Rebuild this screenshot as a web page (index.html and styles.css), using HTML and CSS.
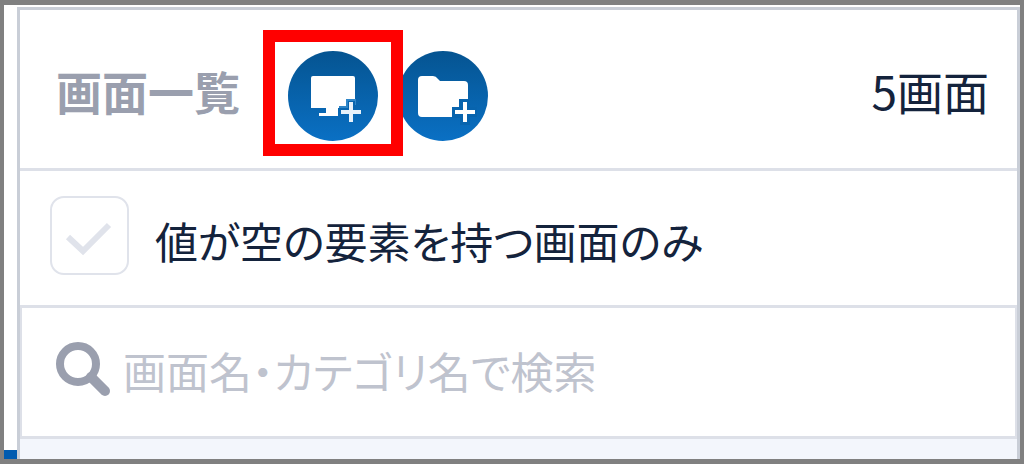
FILE: index.html
```html
<!DOCTYPE html>
<html lang="ja">
<head>
<meta charset="utf-8">
<meta name="viewport" content="width=device-width, initial-scale=1">
<title>画面一覧</title>
<link rel="stylesheet" href="styles.css">
</head>
<body>
<div class="window">
  <div class="rail"><span class="rail-marker"></span></div>
  <main class="panel">
    <header class="panel-header">
      <h1 class="title">画面一覧</h1>
      <div class="actions">
        <button class="round-button highlighted" type="button" aria-label="画面を追加">
          <svg class="button-icon" viewBox="0 0 90 90" aria-hidden="true">
            <path fill="#fff" d="M25 25H65Q67 25 67 27V57H50V65H31V62H38V57H23V27Q23 25 25 25Z"/>
            <path fill="#2f86c8" d="M58 48H68V54H67V57H51V55H58Z"/>
            <path fill="#0864ae" d="M60 50H67V57H52V57H60Z"/>
            <path fill="none" stroke="#e8f2fa" stroke-width="4" d="M63 51V71M53 61H73"/>
          </svg>
        </button>
        <button class="round-button" type="button" aria-label="フォルダーを追加">
          <svg class="button-icon" viewBox="0 0 90 90" aria-hidden="true">
            <path fill="#fff" d="M24 25H35Q38 25 40 28L42 30H66Q70 30 70 34V66H24Q20 66 20 62V29Q20 25 24 25Z"/>
            <path fill="#0864ae" d="M61 48H72V56H79V66H72V74H62V67H54V56H61Z"/>
            <path fill="none" stroke="#fff" stroke-width="4" d="M67 51V71M57 61H77"/>
          </svg>
        </button>
      </div>
      <span class="count">5画面</span>
    </header>
    <div class="filter">
      <input class="check" type="checkbox" id="empty-only">
      <label class="filter-label" for="empty-only">値が空の要素を持つ画面のみ</label>
    </div>
    <div class="search">
      <svg class="search-icon" viewBox="0 0 56 56" aria-hidden="true">
        <circle cx="23" cy="22" r="18" fill="none" stroke="#9a9fae" stroke-width="8"/>
        <path d="M36 35L50 49" fill="none" stroke="#9a9fae" stroke-width="10" stroke-linecap="round"/>
      </svg>
      <input class="search-input" type="text" placeholder="画面名・カテゴリ名で検索" aria-label="画面名・カテゴリ名で検索">
    </div>
    <div class="list"></div>
  </main>
</div>
</body>
</html>
```
FILE: styles.css
```css
* {
  box-sizing: border-box;
}

body {
  margin: 0;
  background: #fff;
  color: #14233c;
  font-family: "Noto Sans CJK JP", sans-serif;
  font-size: 46px;
  line-height: 60px;
  font-feature-settings: "palt";
}

.window {
  display: flex;
  min-height: 100vh;
  border: 4px solid #808080;
  border-top-width: 5px;
  border-bottom-width: 5px;
}

.rail {
  display: flex;
  flex: 0 0 13px;
  align-items: flex-end;
}

.rail-marker {
  width: 100%;
  height: 9px;
  background: #005bb0;
}

.panel {
  display: flex;
  flex: 1;
  flex-direction: column;
  min-width: 0;
  margin-top: 2px;
  border: 3px solid #c9ced7;
  border-bottom: 0;
}

.panel-header {
  display: flex;
  align-items: center;
  padding: 41px 28px 27px 36px;
  border-bottom: 3px solid #dde0e8;
}

.title {
  margin: 0;
  padding-bottom: 12px;
  color: #9a9fae;
  font-size: 46px;
  font-weight: 700;
  line-height: 60px;
}

.actions {
  display: flex;
  gap: 20px;
  margin-left: 48px;
}

.round-button {
  position: relative;
  width: 90px;
  height: 90px;
  padding: 0;
  border: 0;
  border-radius: 50%;
  background: linear-gradient(#055491, #0a70c4);
}

.highlighted {
  z-index: 1;
}

.highlighted::after {
  position: absolute;
  inset: -21px -25px -15px -25px;
  border: 12px solid #f00;
  content: "";
}

.button-icon {
  display: block;
  width: 100%;
}

.count {
  margin-left: auto;
  padding-bottom: 12px;
}

.filter {
  display: flex;
  align-items: center;
  gap: 26px;
  padding: 25px 30px 30px;
  border-bottom: 3px solid #dde0e8;
}

.check {
  width: 79px;
  height: 79px;
  margin: 0;
  border: 2px solid #e0e3eb;
  border-radius: 14px;
  appearance: none;
  background: #fff url("data:image/svg+xml,%3Csvg xmlns='http://www.w3.org/2000/svg' viewBox='0 0 75 75'%3E%3Cpath d='M16 39L31 53L57 27' fill='none' stroke='%23e0e3eb' stroke-width='6'/%3E%3C/svg%3E") center / 100%;
}

.filter-label {
  padding-top: 8px;
  font-size: 43px;
}

.search {
  display: flex;
  align-items: center;
  gap: 12px;
  padding: 31px 33px 35px;
  border: 2px solid #dde0e8;
  border-top: 0;
  border-bottom-width: 3px;
}

.search-icon {
  flex: none;
  width: 56px;
  height: 56px;
}

.search-input {
  flex: 1;
  min-width: 0;
  height: 62px;
  padding: 0;
  border: 0;
  outline: 0;
  background: transparent;
  color: #14233c;
  font: inherit;
  font-feature-settings: inherit;
  font-size: 43px;
}

.search-input::placeholder {
  color: #bfc3ce;
}

.list {
  flex: 1;
  background: #f3f6fc;
}
```
